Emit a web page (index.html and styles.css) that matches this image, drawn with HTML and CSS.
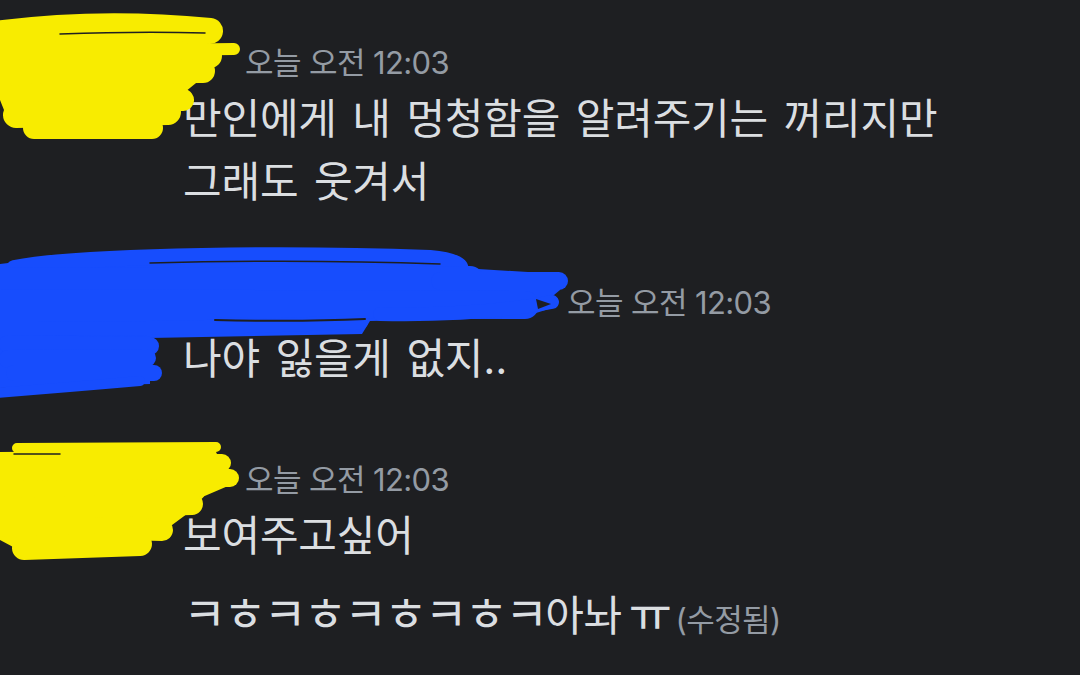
FILE: index.html
```html
<!DOCTYPE html>
<html lang="ko">
<head>
<meta charset="utf-8">
<title>Chat</title>
<link rel="stylesheet" href="styles.css">
</head>
<body>
<main class="chat">
  <article class="group">
    <div class="avatar-slot"></div>
    <div class="content">
      <header class="meta"><span class="name name--short"></span><time class="stamp">오늘 오전 12:03</time></header>
      <p class="msg">만인에게 내 멍청함을 알려주기는 꺼리지만 그래도 웃겨서</p>
    </div>
  </article>
  <article class="group">
    <div class="avatar-slot"></div>
    <div class="content">
      <header class="meta"><span class="name name--long"></span><time class="stamp">오늘 오전 12:03</time></header>
      <p class="msg">나야 잃을게 없지..</p>
    </div>
  </article>
  <article class="group">
    <div class="avatar-slot"></div>
    <div class="content">
      <header class="meta"><span class="name name--short"></span><time class="stamp">오늘 오전 12:03</time></header>
      <p class="msg">보여주고싶어</p>
      <p class="msg msg--tight"><span class="jamo">ㅋㅎㅋㅎㅋㅎㅋㅎㅋ</span>아놔 <span class="jamo">ㅠ</span> <span class="edited">(수정됨)</span></p>
    </div>
  </article>
</main>
<svg class="scribbles" viewBox="0 0 1080 675" aria-hidden="true">
  <g class="ink-yellow" stroke-linecap="round" stroke-linejoin="round">
    <path class="core" d="M0 30 L150 22 L205 26 L212 70 L185 92 L188 104 L160 126 L60 134 L8 120 L0 100 Z"/>
    <path fill="none" stroke-width="26" d="M-5 34 Q100 20 210 31"/>
    <path fill="none" stroke-width="12" d="M150 50 L234 49"/>
    <path fill="none" stroke-width="24" d="M-5 56 L210 56"/>
    <path fill="none" stroke-width="24" d="M-5 72 L203 71"/>
    <path fill="none" stroke-width="22" d="M12 97 Q100 88 183 100"/>
    <path fill="none" stroke-width="26" d="M16 115 L168 112"/>
    <path fill="none" stroke-width="22" d="M34 128 L152 128"/>

    <path class="core" d="M0 452 L215 450 L225 470 L228 486 L200 498 L195 508 L168 528 L140 548 L110 556 L30 556 L0 540 Z"/>
    <path fill="none" stroke-width="10" d="M17 448 L216 447"/>
    <path fill="none" stroke-width="18" d="M17 463 L222 463"/>
    <path fill="none" stroke-width="18" d="M12 478 L230 478"/>
    <path fill="none" stroke-width="22" d="M5 492 L195 490"/>
    <path fill="none" stroke-width="22" d="M5 509 L192 504"/>
    <path fill="none" stroke-width="22" d="M5 526 L162 530"/>
    <path fill="none" stroke-width="24" d="M24 548 L140 544"/>
  </g>
  <g class="ink-blue" stroke-linecap="round" stroke-linejoin="round">
    <path class="core" d="M0 264 L100 252 L430 252 L462 268 L560 274 L560 290 L548 300 L552 308 L520 318 L370 321 L362 334 L150 338 L150 384 L0 388 Z"/>
    <path fill="none" stroke-width="16" d="M14 268 C90 254 300 253 430 258 C462 261 470 270 448 276"/>
    <path fill="none" stroke-width="28" d="M0 282 L470 280"/>
    <path fill="none" stroke-width="18" d="M440 281 L559 281"/>
    <path fill="none" stroke-width="28" d="M0 303 L525 305"/>
    <path fill="none" stroke-width="14" d="M380 314 Q480 316 552 302"/>
    <path fill="none" stroke-width="18" d="M0 322 L210 322"/>
    <path fill="none" stroke-width="14" d="M0 329 Q200 329 361 322"/>
    <path fill="none" stroke-width="18" d="M8 344 L150 346"/>
    <path fill="none" stroke-width="18" d="M8 359 L147 358"/>
    <path fill="none" stroke-width="16" d="M14 373 L154 373"/>
    <path fill="none" stroke-width="10" d="M-5 393 Q60 388 140 381"/>
  </g>
  <g class="ink-gap" fill="none" stroke-linecap="round">
    <path stroke-width="1.5" d="M60 34 Q140 31 205 33"/>
    <path stroke-width="1.5" d="M14 454 L60 454"/>
    <path stroke-width="1.5" d="M150 263 Q300 259 440 264"/>
    <path stroke-width="2" d="M215 320 Q300 322 365 319"/>
  </g>
  <path class="ink-notch" d="M536 299 L551 304 L538 309 Z"/>
</svg>
</body>
</html>
```
FILE: styles.css
```css
* {
  box-sizing: border-box;
  margin: 0;
  padding: 0;
}

html,
body {
  width: 1080px;
  height: 675px;
  overflow: hidden;
}

body {
  position: relative;
  background: #1e1f22;
  color: #dbdee1;
  font-family: Inter, "Noto Sans CJK KR", sans-serif;
}

.chat {
  display: flex;
  flex-direction: column;
  gap: 65px;
  padding: 38px 60px 0 0;
}

.group {
  display: flex;
}

.avatar-slot {
  flex: 0 0 183px;
}

.content {
  flex: 1;
  min-width: 0;
}

.meta {
  display: flex;
  align-items: center;
  height: 49px;
}

.name {
  flex: none;
  height: 1px;
}

.name--short {
  width: 62px;
}

.name--long {
  width: 384px;
}

.stamp {
  font-size: 31px;
  line-height: 49px;
  letter-spacing: -0.6px;
  color: #949ba4;
}

.msg {
  font-size: 42px;
  line-height: 63px;
  letter-spacing: -0.2px;
  word-spacing: 4px;
  word-break: keep-all;
}

.msg + .msg {
  margin-top: 15px;
}

.msg--tight {
  word-spacing: -5px;
}

.jamo {
  font-size: 47px;
  letter-spacing: -3px;
}

.edited {
  font-size: 31px;
  letter-spacing: -0.6px;
  word-spacing: 0;
  color: #949ba4;
}

.scribbles {
  position: absolute;
  left: 0;
  top: 0;
  width: 1080px;
  height: 675px;
  pointer-events: none;
}

.ink-yellow {
  stroke: #f8ec00;
}

.ink-yellow .core {
  fill: #f8ec00;
  stroke: none;
}

.ink-blue {
  stroke: #174dfd;
}

.ink-blue .core {
  fill: #174dfd;
  stroke: none;
}

.ink-gap {
  stroke: #1e1f22;
}

.ink-notch {
  fill: #1e1f22;
}
```
